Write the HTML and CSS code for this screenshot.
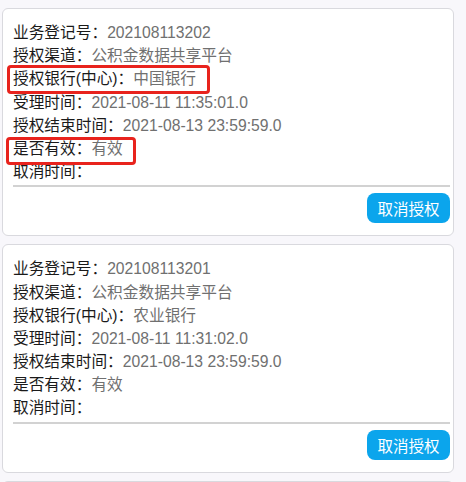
FILE: index.html
```html
<!DOCTYPE html>
<html lang="zh-CN">
<head>
<meta charset="utf-8">
<link rel="stylesheet" href="styles.css">
</head>
<body>
<div class="list">
  <div class="card">
    <div class="row"><span class="label">业务登记号：</span><span class="value">202108113202</span></div>
    <div class="row"><span class="label">授权渠道：</span><span class="value">公积金数据共享平台</span></div>
    <div class="row"><span class="label">授权银行(中心)：</span><span class="value">中国银行</span></div>
    <div class="row"><span class="label">受理时间：</span><span class="value">2021-08-11 11:35:01.0</span></div>
    <div class="row"><span class="label">授权结束时间：</span><span class="value">2021-08-13 23:59:59.0</span></div>
    <div class="row"><span class="label">是否有效：</span><span class="value">有效</span></div>
    <div class="row"><span class="label">取消时间：</span><span class="value"></span></div>
    <div class="divider"></div>
    <div class="actions"><button class="btn">取消授权</button></div>
    <div class="mark mark-bank"></div>
    <div class="mark mark-valid"></div>
  </div>
  <div class="card">
    <div class="row"><span class="label">业务登记号：</span><span class="value">202108113201</span></div>
    <div class="row"><span class="label">授权渠道：</span><span class="value">公积金数据共享平台</span></div>
    <div class="row"><span class="label">授权银行(中心)：</span><span class="value">农业银行</span></div>
    <div class="row"><span class="label">受理时间：</span><span class="value">2021-08-11 11:31:02.0</span></div>
    <div class="row"><span class="label">授权结束时间：</span><span class="value">2021-08-13 23:59:59.0</span></div>
    <div class="row"><span class="label">是否有效：</span><span class="value">有效</span></div>
    <div class="row"><span class="label">取消时间：</span><span class="value"></span></div>
    <div class="divider"></div>
    <div class="actions"><button class="btn">取消授权</button></div>
  </div>
  <div class="card"></div>
</div>
</body>
</html>
```
FILE: styles.css
```css
html, body {
  margin: 0;
  padding: 0;
  background: #f8f7fb;
  overflow: hidden;
}
body {
  font-family: "Liberation Sans", "Noto Sans CJK SC", sans-serif;
  font-size: 15.7px;
}
.list {
  width: 452px;
  padding: 8px 0 0 2px;
  display: flex;
  flex-direction: column;
  gap: 8px;
}
.card {
  position: relative;
  background: #fff;
  border: 1px solid #d9d9de;
  border-radius: 6px;
  padding: 12px 3px 12px 10px;
  min-height: 200px;
}
.row {
  line-height: 23.2px;
  height: 23.2px;
  white-space: nowrap;
}
.label {
  color: #1a1a1a;
}
.value {
  color: #707070;
}
.divider {
  margin-top: 2px;
  height: 2px;
  background: #d2d2d2;
}
.actions {
  display: flex;
  justify-content: flex-end;
  margin-top: 6px;
}
.btn {
  width: 83px;
  height: 30px;
  border: none;
  border-radius: 8px;
  background: #0ba5ec;
  color: #fff;
  font-family: "Liberation Sans", "Noto Sans CJK SC", sans-serif;
  font-size: 15.5px;
  padding: 0;
}
.mark {
  position: absolute;
  border: 3px solid #e8231d;
  border-radius: 4px;
}
.mark-bank {
  left: 4px;
  top: 56px;
  width: 197px;
  height: 23px;
}
.mark-valid {
  left: 3px;
  top: 128px;
  width: 124px;
  height: 22px;
}
```
